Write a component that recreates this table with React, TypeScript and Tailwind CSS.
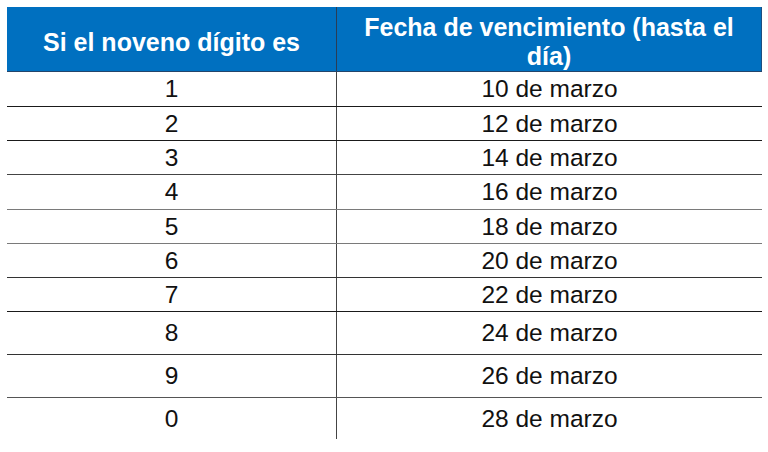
import React from 'react';

const rows = [
  { digit: '1', date: '10 de marzo', h: 'h-[35px]', line: 'border-[#1a1a1a]' },
  { digit: '2', date: '12 de marzo', h: 'h-[34px]', line: 'border-[#1a1a1a]' },
  { digit: '3', date: '14 de marzo', h: 'h-[34px]', line: 'border-[#444]' },
  { digit: '4', date: '16 de marzo', h: 'h-[35px]', line: 'border-[#7a7a7a]' },
  { digit: '5', date: '18 de marzo', h: 'h-[34px]', line: 'border-[#7a7a7a]' },
  { digit: '6', date: '20 de marzo', h: 'h-[34px]', line: 'border-[#333]' },
  { digit: '7', date: '22 de marzo', h: 'h-[34px]', line: 'border-[#1a1a1a]' },
  { digit: '8', date: '24 de marzo', h: 'h-[43px]', line: 'border-[#333]' },
  { digit: '9', date: '26 de marzo', h: 'h-[43px]', line: 'border-[#555]' },
  { digit: '0', date: '28 de marzo', h: 'h-[42px]', line: 'border-transparent' },
];

export default function App() {
  return (
    <div className="w-[768px] h-[452px] bg-white pt-[7px] pl-[7px] font-['Liberation_Sans',Arial,sans-serif] overflow-hidden">
      <div className="w-[755px]">
        {/* header */}
        <div className="flex h-[65px] bg-[#0070c0] border-b border-[#23456b] text-white font-bold text-[25px] leading-[29px]">
          <div className="w-[330px] border-r border-[#2a3d55] flex items-center justify-center pt-[7px]">
            Si el noveno dígito es
          </div>
          <div className="flex-1 border-r border-[#1d4f80] flex items-center justify-center text-center px-2 pt-[5px]">
            Fecha de vencimiento (hasta el día)
          </div>
        </div>

        {rows.map((r) => (
          <div key={r.digit} className={`flex ${r.h} border-b ${r.line} text-[24.5px] text-[#111]`}>
            <div className="w-[330px] border-r border-[#444] flex items-center justify-center pt-px">
              {r.digit}
            </div>
            <div className="flex-1 flex items-center justify-center pt-px">
              {r.date}
            </div>
          </div>
        ))}
      </div>
    </div>
  );
}
